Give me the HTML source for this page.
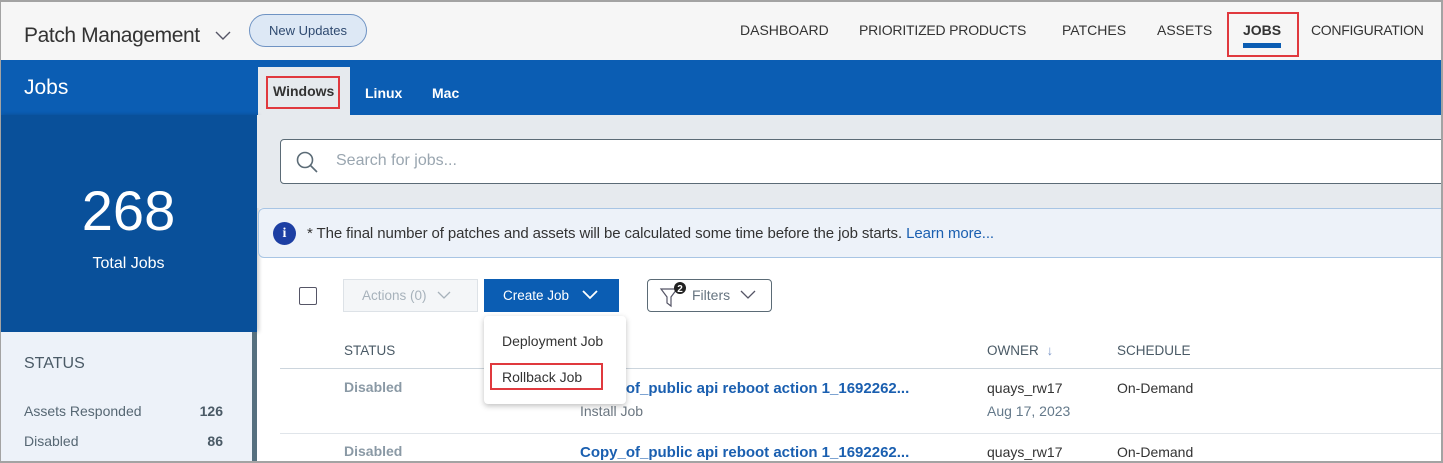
<!DOCTYPE html>
<html><head><meta charset="utf-8"><style>
*{margin:0;padding:0;box-sizing:border-box}
body{width:1443px;height:463px;overflow:hidden;font-family:"Liberation Sans",sans-serif;background:#fff;position:relative}
.a{position:absolute;white-space:nowrap}
.frame{position:absolute;left:0;top:0;width:1443px;height:463px;border:2px solid #a3a3a3;border-left-width:1px;pointer-events:none;z-index:50}
</style></head><body>
<div class="a" style="left:0;top:0;width:1443px;height:60px;background:#f6f6f6"></div>
<div class="a" style="left:24px;top:24px;font-size:21px;color:#333;letter-spacing:-0.4px">Patch Management</div>
<svg class="a" style="left:214px;top:29px" width="18" height="12"><path d="M2 3 L9 10 L16 3" fill="none" stroke="#556" stroke-width="1.4"/></svg>
<div class="a" style="left:249px;top:14px;width:118px;height:33px;border:1px solid #6f93c3;border-radius:17px;background:#dde8f5;font-size:13px;color:#2f4a70;text-align:center;line-height:31px">New Updates</div>
<div class="a" style="top:22px;left:740px;font-size:14px;color:#333">DASHBOARD</div>
<div class="a" style="top:22px;left:859px;font-size:14px;color:#333;letter-spacing:-0.2px">PRIORITIZED PRODUCTS</div>
<div class="a" style="top:22px;left:1062px;font-size:14px;color:#333">PATCHES</div>
<div class="a" style="top:22px;left:1157px;font-size:14px;color:#333">ASSETS</div>
<div class="a" style="top:22px;left:1243px;font-size:14px;color:#333;font-weight:bold">JOBS</div>
<div class="a" style="top:22px;left:1311px;font-size:14px;color:#333;letter-spacing:-0.3px">CONFIGURATION</div>
<div class="a" style="left:1243px;top:43px;width:38px;height:5px;background:#0b5db3"></div>
<div class="a" style="left:1227px;top:12px;width:72px;height:45px;border:2px solid #e0393e"></div>

<div class="a" style="left:0;top:60px;width:1443px;height:55px;background:#0b5db3"></div>
<div class="a" style="left:24px;top:76px;font-size:21px;color:#fff">Jobs</div>
<div class="a" style="left:258px;top:67px;width:92px;height:48px;background:#e6eaee"></div>
<div class="a" style="left:273px;top:83px;font-size:14px;font-weight:bold;color:#333">Windows</div>
<div class="a" style="left:266px;top:76px;width:74px;height:33px;border:2px solid #e0393e"></div>
<div class="a" style="left:365px;top:85px;font-size:14px;font-weight:bold;color:#fff">Linux</div>
<div class="a" style="left:432px;top:85px;font-size:14px;font-weight:bold;color:#fff">Mac</div>

<div class="a" style="left:0;top:115px;width:257px;height:217px;background:#09509a;box-shadow:2px 0 4px rgba(0,0,0,.2)"></div>
<div class="a" style="left:0;top:178px;width:257px;text-align:center;font-size:56px;color:#fff">268</div>
<div class="a" style="left:0;top:255px;width:257px;text-align:center;font-size:16px;color:#fff">Total Jobs</div>
<div class="a" style="left:0;top:332px;width:252px;height:131px;background:#edf2f9"></div>
<div class="a" style="left:252px;top:332px;width:5px;height:131px;background:#56707f"></div>
<div class="a" style="left:24px;top:355px;font-size:16px;color:#4a5a66">STATUS</div>
<div class="a" style="left:24px;top:403px;font-size:14px;color:#566773">Assets Responded</div>
<div class="a" style="left:180px;top:403px;width:43px;text-align:right;font-size:14px;font-weight:bold;color:#4a5a66">126</div>
<div class="a" style="left:24px;top:433px;font-size:14px;color:#566773">Disabled</div>
<div class="a" style="left:180px;top:433px;width:43px;text-align:right;font-size:14px;font-weight:bold;color:#4a5a66">86</div>

<div class="a" style="left:257px;top:115px;width:1186px;height:93px;background:#e6eaee"></div>
<div class="a" style="left:280px;top:139px;width:1170px;height:45px;background:#fff;border:1px solid #5b6b76;border-radius:4px"></div>
<svg class="a" style="left:295px;top:150px" width="24" height="24"><circle cx="10" cy="10" r="7.5" fill="none" stroke="#5b6b76" stroke-width="1.6"/><path d="M15.5 15.5 L22 22" stroke="#5b6b76" stroke-width="1.6"/></svg>
<div class="a" style="left:336px;top:152px;font-size:16px;color:#9aa6b0">Search for jobs...</div>
<div class="a" style="left:258px;top:208px;width:1185px;height:50px;background:#edf2f9;border:1px solid #a8c5e4;border-radius:6px 0 0 6px"></div>
<div class="a" style="left:273px;top:222px;width:23px;height:23px;border-radius:50%;background:#1d3fa3;color:#fff;font-size:14px;font-weight:bold;text-align:center;line-height:23px;font-family:'Liberation Serif',serif">i</div>
<div class="a" style="left:307px;top:225px;font-size:15px;color:#333;letter-spacing:-0.1px">* The final number of patches and assets will be calculated some time before the job starts. <span style="color:#1a5fb0">Learn more...</span></div>

<div class="a" style="left:299px;top:287px;width:18px;height:18px;border:1.5px solid #556;border-radius:2px"></div>
<div class="a" style="left:343px;top:279px;width:135px;height:33px;background:#f4f6f8;border:1px solid #dde2e7;font-size:13.5px;color:#a7b2bb;line-height:31px;padding-left:18px">Actions (0) <svg width="16" height="10" style="margin-left:6px"><path d="M2 2 L8 8 L14 2" fill="none" stroke="#a7b2bb" stroke-width="1.3"/></svg></div>
<div class="a" style="left:484px;top:279px;width:135px;height:33px;background:#0b5db3;font-size:13.5px;color:#fff;line-height:33px;padding-left:19px">Create Job <svg width="18" height="11" style="margin-left:8px"><path d="M2 2 L9 9 L16 2" fill="none" stroke="#fff" stroke-width="1.8"/></svg></div>
<div class="a" style="left:647px;top:279px;width:125px;height:33px;border:1px solid #5b6b76;border-radius:4px;font-size:14px;color:#667480;line-height:31px;padding-left:44px">Filters <svg width="18" height="11" style="margin-left:5px"><path d="M2 2 L9 9 L16 2" fill="none" stroke="#556" stroke-width="1.3"/></svg></div>
<svg class="a" style="left:658px;top:281px" width="30" height="28"><path d="M3 8 H19 L13 16 V25 L9 22 V16 Z" fill="none" stroke="#556" stroke-width="1.2"/><circle cx="22" cy="7" r="6" fill="#222"/><text x="22" y="11" font-size="10" font-weight="bold" fill="#fff" text-anchor="middle" font-family="Liberation Sans">2</text></svg>

<div class="a" style="left:344px;top:343px;font-size:13.5px;color:#4a5a66">STATUS</div>
<div class="a" style="left:987px;top:343px;font-size:13.5px;color:#4a5a66">OWNER <span style="color:#7b95c8;margin-left:4px">↓</span></div>
<div class="a" style="left:1117px;top:343px;font-size:13.5px;color:#4a5a66">SCHEDULE</div>
<div class="a" style="left:280px;top:368px;width:1163px;height:1px;background:#ccd5dd"></div>
<div class="a" style="left:344px;top:379px;font-size:14px;font-weight:bold;color:#8a99a5">Disabled</div>
<div class="a" style="left:580px;top:380px;font-size:15px;font-weight:bold;color:#1a5fb0">Copy_of_public api reboot action 1_1692262...</div>
<div class="a" style="left:580px;top:403px;font-size:14px;color:#6b7680">Install Job</div>
<div class="a" style="left:987px;top:380px;font-size:14px;color:#333">quays_rw17</div>
<div class="a" style="left:987px;top:403px;font-size:14px;color:#64798a">Aug 17, 2023</div>
<div class="a" style="left:1117px;top:380px;font-size:14px;color:#333">On-Demand</div>
<div class="a" style="left:280px;top:433px;width:1163px;height:1px;background:#e0e5ea"></div>
<div class="a" style="left:344px;top:443px;font-size:14px;font-weight:bold;color:#8a99a5">Disabled</div>
<div class="a" style="left:580px;top:444px;font-size:15px;font-weight:bold;color:#1a5fb0">Copy_of_public api reboot action 1_1692262...</div>
<div class="a" style="left:987px;top:444px;font-size:14px;color:#333">quays_rw17</div>
<div class="a" style="left:1117px;top:444px;font-size:14px;color:#333">On-Demand</div>

<div class="a" style="left:484px;top:316px;width:142px;height:88px;background:#fff;border-radius:4px;box-shadow:0 2px 6px rgba(0,0,0,.25)"></div>
<div class="a" style="left:502px;top:333px;font-size:14px;color:#333">Deployment Job</div>
<div class="a" style="left:502px;top:369px;font-size:14px;color:#333">Rollback Job</div>
<div class="a" style="left:490px;top:363px;width:113px;height:27px;border:2px solid #e0393e"></div>
<div class="frame"></div>
</body></html>
